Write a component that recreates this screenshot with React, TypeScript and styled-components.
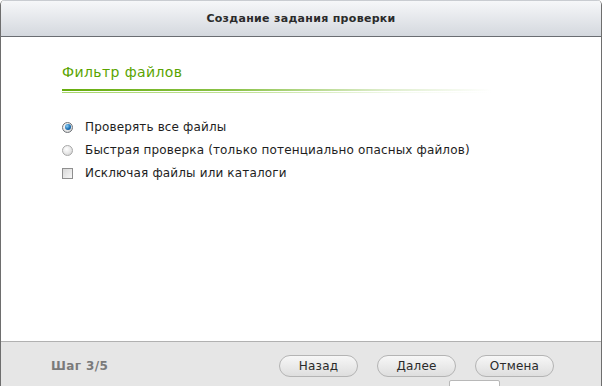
import React, { useState } from "react";
import styled, { createGlobalStyle } from "styled-components";

const GlobalStyle = createGlobalStyle`
  html, body {
    margin: 0;
    padding: 0;
    background: #ffffff;
  }
  body {
    font-family: "DejaVu Sans", Tahoma, sans-serif;
    font-size: 12px;
    color: #333;
  }
`;

const Window = styled.div`
  width: 602px;
  height: 386px;
  box-sizing: border-box;
  display: flex;
  flex-direction: column;
  border-left: 1px solid #6e6e6e;
  border-right: 1px solid #6e6e6e;
  border-radius: 5px 5px 0 0;
  overflow: hidden;
  background: #fff;
`;

const Header = styled.div`
  flex: none;
  height: 37px;
  box-sizing: border-box;
  display: flex;
  align-items: center;
  justify-content: center;
  background: linear-gradient(#f6f7f9, #d4d8de);
  border-top: 1px solid #c9ccd1;
  border-bottom: 1px solid #6a6d72;
  font-weight: bold;
  font-size: 11px;
  color: #2b2b2b;
  letter-spacing: 0.3px;
`;

const Body = styled.div`
  flex: 1;
  padding: 26px 0 0 61px;
`;

const SectionTitle = styled.div`
  color: #5aa400;
  font-size: 14px;
  line-height: 18px;
  letter-spacing: 0.4px;
`;

const Rule = styled.div`
  margin-top: 8px;
  width: 430px;
  height: 2px;
  position: relative;
  background: linear-gradient(to right, #66ad0c 0%, #8cc34a 40%, rgba(200, 225, 170, 0.6) 75%, rgba(255, 255, 255, 0) 100%);
  &::after {
    content: "";
    position: absolute;
    left: 0;
    top: 3px;
    width: 430px;
    height: 1px;
    background: linear-gradient(to right, #a6d46a 0%, #c4e29c 45%, rgba(235, 245, 225, 0.5) 80%, rgba(255, 255, 255, 0) 100%);
  }
`;

const Options = styled.div`
  margin-top: 29px;
  display: flex;
  flex-direction: column;
  gap: 9px;
`;

const Option = styled.label`
  display: flex;
  align-items: center;
  gap: 12px;
  height: 14px;
  font-size: 12px;
  letter-spacing: 0.15px;
  color: #1e1e1e;
  cursor: default;
`;

const Radio = styled.span<{ $checked?: boolean }>`
  width: 11px;
  height: 11px;
  border-radius: 50%;
  box-sizing: border-box;
  border: 1px solid ${(p) => (p.$checked ? "#6f7378" : "#a8a8a8")};
  background: radial-gradient(circle at 40% 35%, #ffffff 0%, #e6e6e6 55%, #c6c6c6 100%);
  display: flex;
  align-items: center;
  justify-content: center;
  &::after {
    content: "";
    display: ${(p) => (p.$checked ? "block" : "none")};
    width: 6px;
    height: 6px;
    border-radius: 50%;
    background: radial-gradient(circle at 35% 35%, #8fd0f5 0%, #1a6fb4 55%, #0b4a86 100%);
  }
`;

const Check = styled.span`
  width: 11px;
  height: 11px;
  box-sizing: border-box;
  border: 1px solid #8f8f8f;
  background: linear-gradient(135deg, #d8d8d8, #f7f7f7);
`;

const Footer = styled.div`
  flex: none;
  height: 45px;
  box-sizing: border-box;
  border-top: 1px solid #b1b1b1;
  background: #e6e6e6;
  display: flex;
  align-items: flex-start;
  padding: 13px 0 0 50px;
  position: relative;
`;

const Step = styled.div`
  width: 228px;
  font-weight: bold;
  color: #7a7a7a;
  font-size: 12px;
  line-height: 22px;
  letter-spacing: 0.4px;
`;

const Buttons = styled.div`
  display: flex;
  gap: 19px;
`;

const Button = styled.button`
  width: 79px;
  height: 22px;
  border-radius: 11px;
  border: 1px solid #b4b4b4;
  background: linear-gradient(#f7f7f7, #dedede);
  font-family: "DejaVu Sans", Tahoma, sans-serif;
  font-size: 12px;
  letter-spacing: 0.2px;
  color: #2a2a2a;
  padding: 0;
`;

const Peek = styled.div`
  position: absolute;
  left: 448px;
  top: 38px;
  width: 49px;
  height: 12px;
  background: #fff;
  border: 1px solid #b8b8b8;
  border-radius: 2px;
`;

export default function App() {
  const [mode, setMode] = useState<"all" | "fast">("all");
  return (
    <>
      <GlobalStyle />
      <Window>
        <Header>Создание задания проверки</Header>
        <Body>
          <SectionTitle>Фильтр файлов</SectionTitle>
          <Rule />
          <Options>
            <Option onClick={() => setMode("all")}>
              <Radio $checked={mode === "all"} />
              Проверять все файлы
            </Option>
            <Option onClick={() => setMode("fast")}>
              <Radio $checked={mode === "fast"} />
              Быстрая проверка (только потенциально опасных файлов)
            </Option>
            <Option>
              <Check />
              Исключая файлы или каталоги
            </Option>
          </Options>
        </Body>
        <Footer>
          <Step>Шаг 3/5</Step>
          <Buttons>
            <Button>Назад</Button>
            <Button>Далее</Button>
            <Button>Отмена</Button>
          </Buttons>
          <Peek />
        </Footer>
      </Window>
    </>
  );
}
